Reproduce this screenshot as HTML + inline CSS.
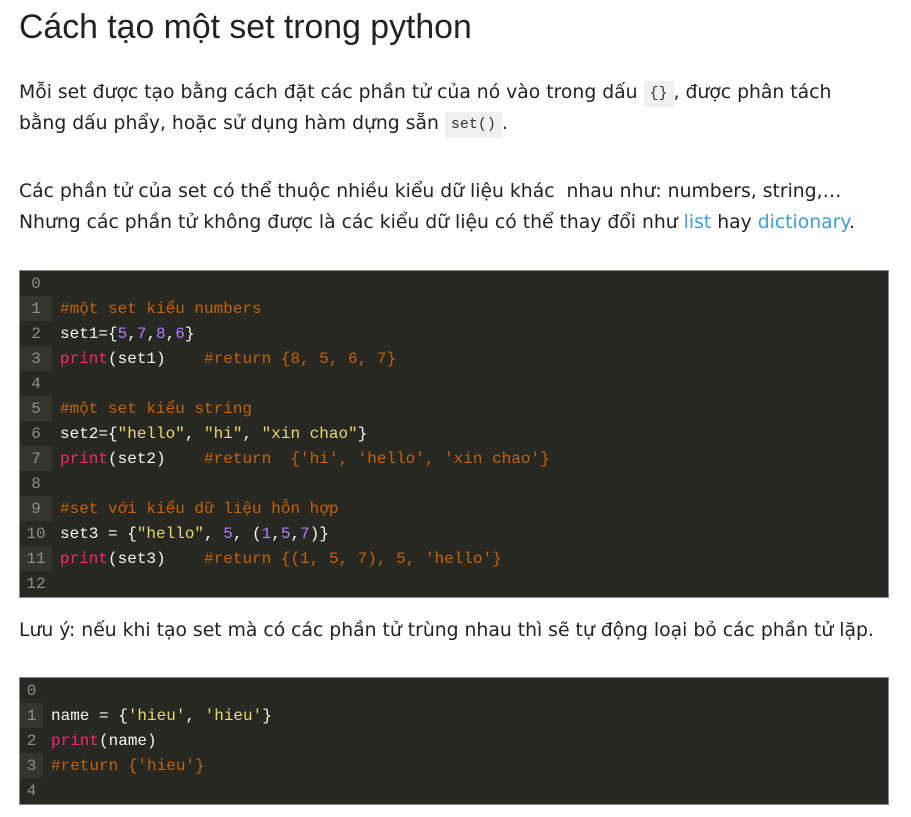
<!DOCTYPE html>
<html><head><meta charset="utf-8"><style>
body{margin:0;background:#fff;width:911px;height:817px;overflow:hidden;font-family:"Liberation Sans","DejaVu Sans",sans-serif;color:#222;}
h1{position:absolute;left:19px;top:8px;margin:0;font-size:33.8px;font-weight:normal;color:#222;}
.p{position:absolute;left:19px;font-family:"DejaVu Sans",sans-serif;font-size:18.8px;line-height:31px;white-space:nowrap;}
code{font-family:"Liberation Mono",monospace;font-size:15px;background:#f0f0f0;padding:0 6px;color:#333;display:inline-block;line-height:26px;vertical-align:1px;}
a{color:#3a9ee0;text-decoration:none;}
.cb{position:absolute;left:19px;width:868px;background:#272822;border:1px solid #888;font-family:"Liberation Mono","DejaVu Sans Mono",monospace;font-size:16px;}
.l{height:25px;line-height:27px;white-space:pre;color:#f8f8f2;display:flex;}
.n{color:#8f908a;text-align:center;flex:none;}
.l:nth-child(even) .n{background:#34352f;}
.t{padding-left:8px;}
.c{color:#c5620e;}.k{color:#f92672;}.s{color:#e6db74;}.m{color:#ae81ff;}
</style></head><body>
<h1>Cách tạo một set trong python</h1>
<div class="p" style="top:77px">Mỗi set được tạo bằng cách đặt các phần tử của nó vào trong dấu <code>{}</code>, được phân tách<br>bằng dấu phẩy, hoặc sử dụng hàm dựng sẵn <code>set()</code>.</div>
<div class="p" style="top:176px">Các phần tử của set có thể thuộc nhiều kiểu dữ liệu khác&nbsp; nhau như: numbers, string,…<br>Nhưng các phần tử không được là các kiểu dữ liệu có thể thay đổi như <a>list</a> hay <a>dictionary</a>.</div>
<div class="cb" style="top:270px;height:326px">
<div class="l"><span class="n" style="width:32px">0</span><span class="t"></span></div>
<div class="l"><span class="n" style="width:32px">1</span><span class="t c">#một set kiểu numbers</span></div>
<div class="l"><span class="n" style="width:32px">2</span><span class="t">set1={<span class="m">5</span>,<span class="m">7</span>,<span class="m">8</span>,<span class="m">6</span>}</span></div>
<div class="l"><span class="n" style="width:32px">3</span><span class="t"><span class="k">print</span>(set1)    <span class="c">#return {8, 5, 6, 7}</span></span></div>
<div class="l"><span class="n" style="width:32px">4</span><span class="t"></span></div>
<div class="l"><span class="n" style="width:32px">5</span><span class="t c">#một set kiểu string</span></div>
<div class="l"><span class="n" style="width:32px">6</span><span class="t">set2={<span class="s">"hello"</span>, <span class="s">"hi"</span>, <span class="s">"xin chao"</span>}</span></div>
<div class="l"><span class="n" style="width:32px">7</span><span class="t"><span class="k">print</span>(set2)    <span class="c">#return  {'hi', 'hello', 'xin chao'}</span></span></div>
<div class="l"><span class="n" style="width:32px">8</span><span class="t"></span></div>
<div class="l"><span class="n" style="width:32px">9</span><span class="t c">#set với kiểu dữ liệu hỗn hợp</span></div>
<div class="l"><span class="n" style="width:32px">10</span><span class="t">set3 = {<span class="s">"hello"</span>, <span class="m">5</span>, (<span class="m">1</span>,<span class="m">5</span>,<span class="m">7</span>)}</span></div>
<div class="l"><span class="n" style="width:32px">11</span><span class="t"><span class="k">print</span>(set3)    <span class="c">#return {(1, 5, 7), 5, 'hello'}</span></span></div>
<div class="l"><span class="n" style="width:32px">12</span><span class="t"></span></div>
</div>
<div class="p" style="top:615px">Lưu ý: nếu khi tạo set mà có các phần tử trùng nhau thì sẽ tự động loại bỏ các phần tử lặp.</div>
<div class="cb" style="top:677px;height:126px">
<div class="l"><span class="n" style="width:23px">0</span><span class="t"></span></div>
<div class="l"><span class="n" style="width:23px">1</span><span class="t">name = {<span class="s">'hieu'</span>, <span class="s">'hieu'</span>}</span></div>
<div class="l"><span class="n" style="width:23px">2</span><span class="t"><span class="k">print</span>(name)</span></div>
<div class="l"><span class="n" style="width:23px">3</span><span class="t c">#return {'hieu'}</span></div>
<div class="l"><span class="n" style="width:23px">4</span><span class="t"></span></div>
</div>
</body></html>
